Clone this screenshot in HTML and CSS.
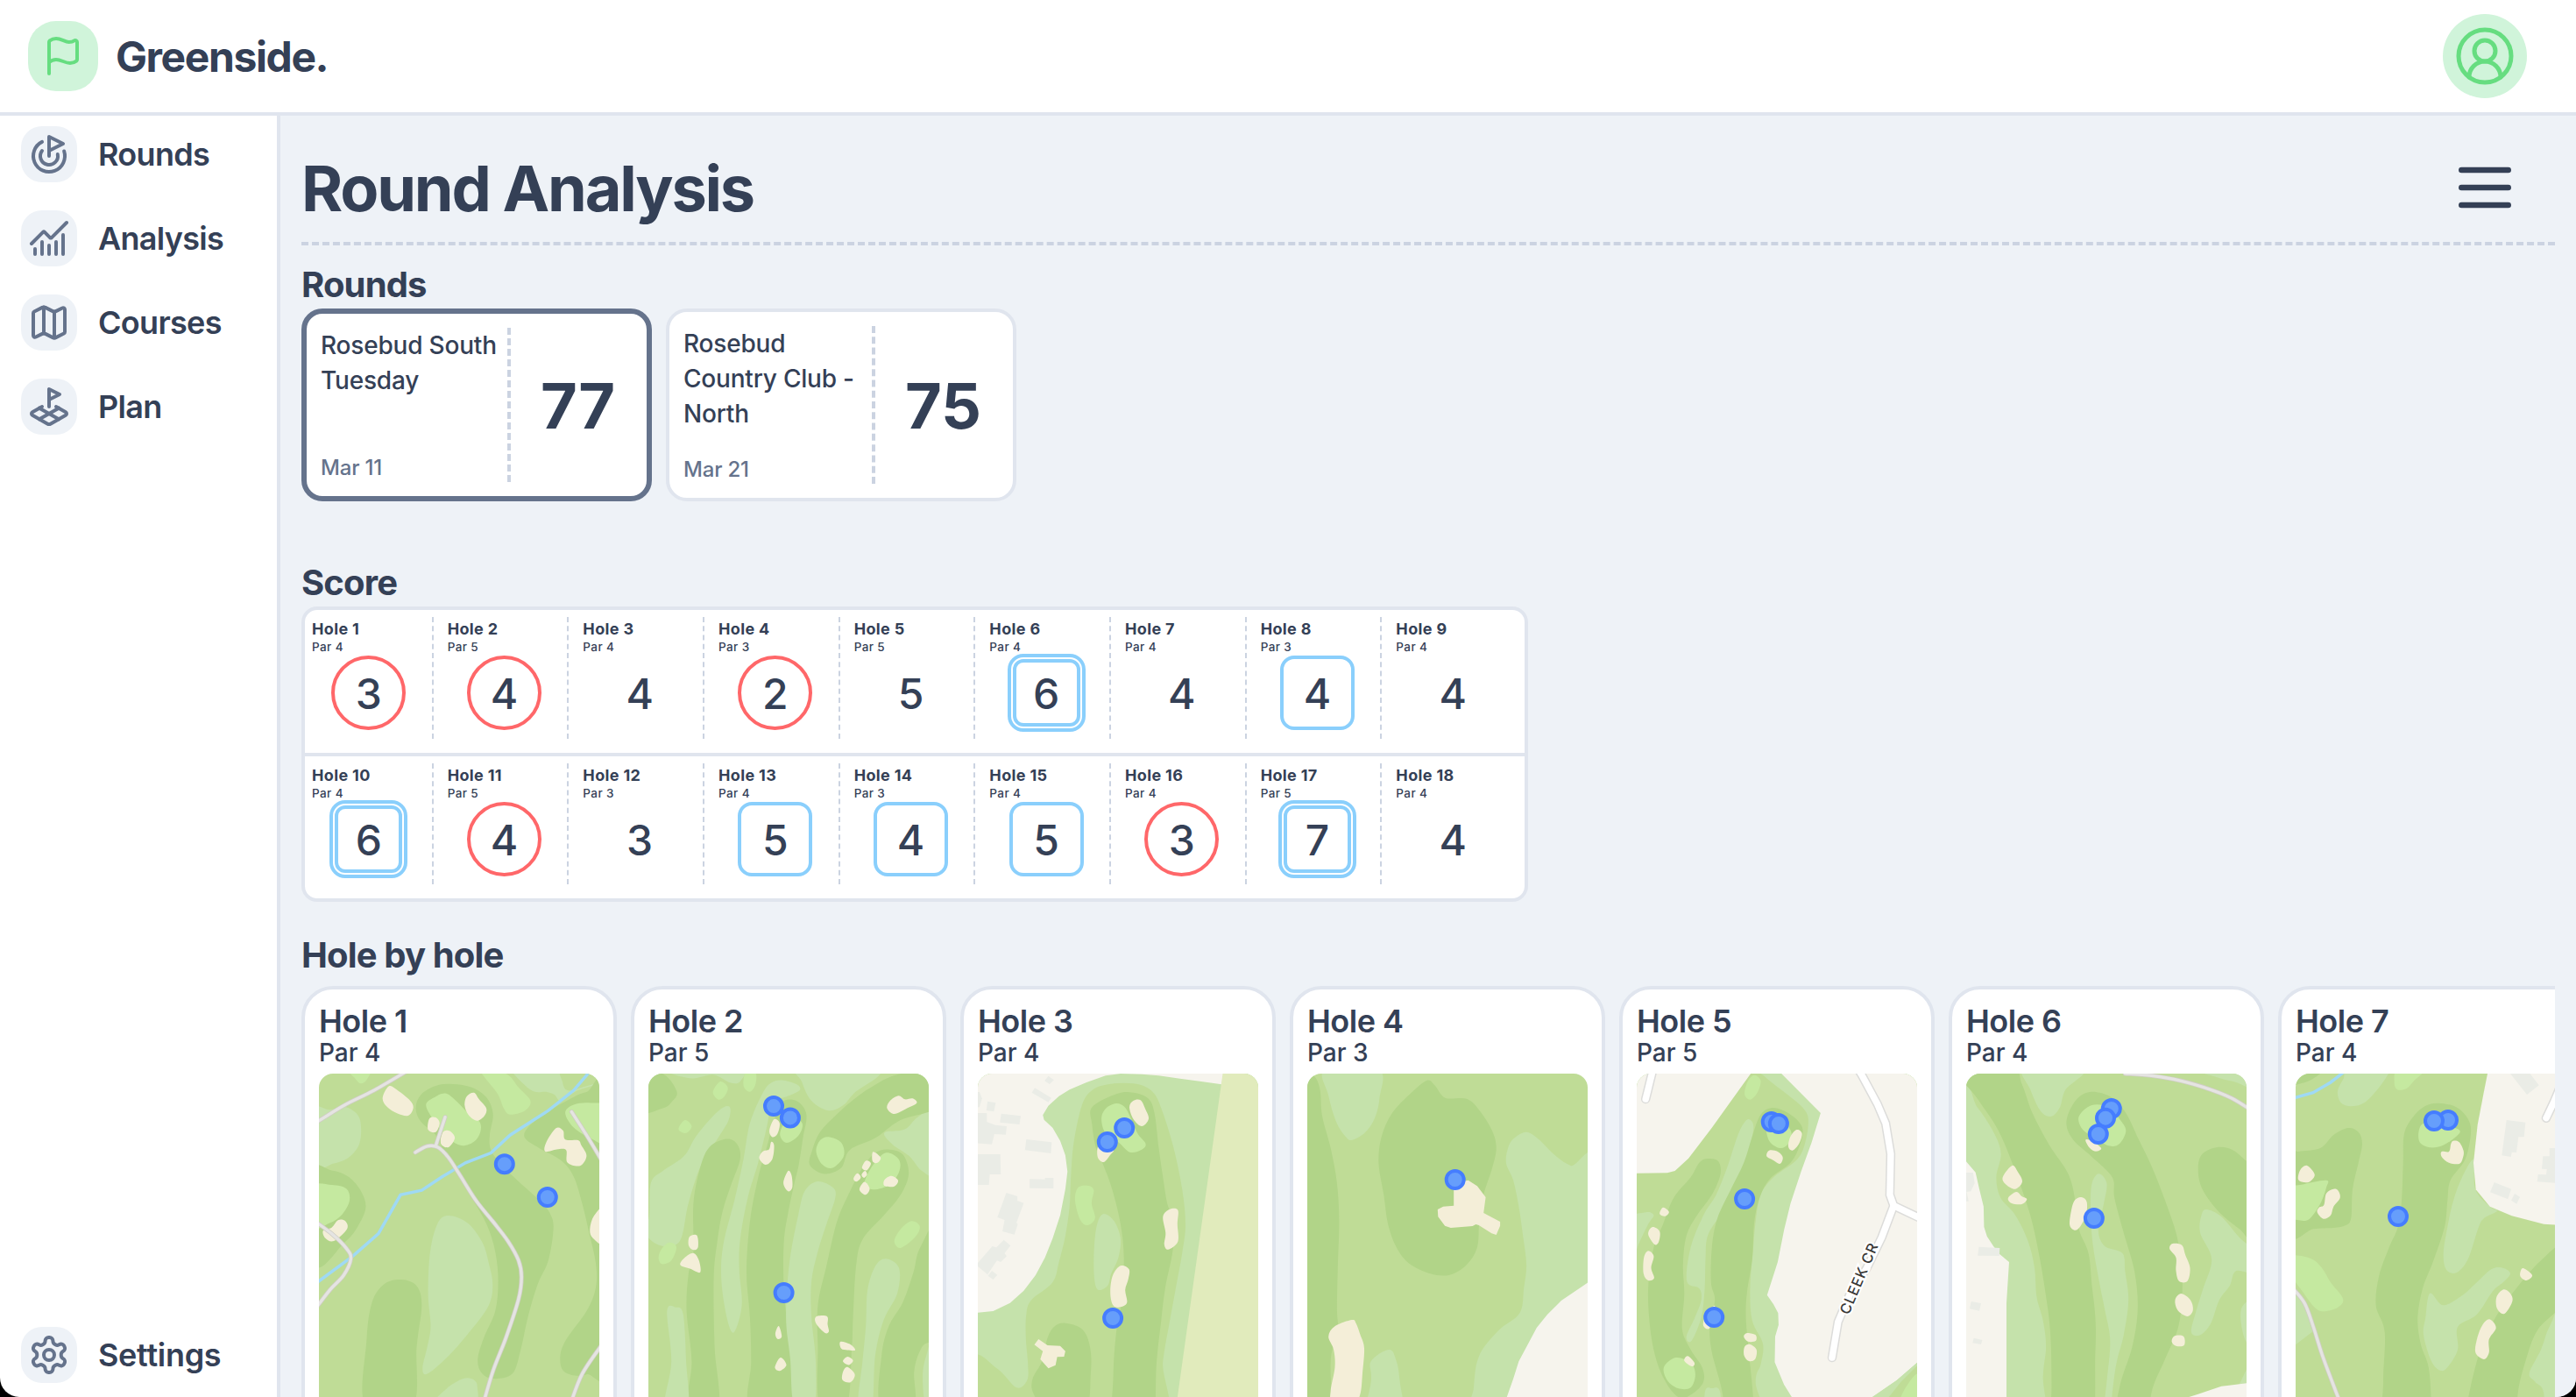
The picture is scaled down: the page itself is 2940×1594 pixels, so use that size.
FILE: index.html
```html
<!DOCTYPE html>
<html lang="en">
<head>
<meta charset="utf-8">
<title>Greenside</title>
<link rel="stylesheet" href="styles.css">
</head>
<body>
<div class="app">
  <header class="topbar">
    <div class="brand">
      <span class="brand-mark"><svg class="icon" viewBox="0 0 24 24"><path d="M4 22V4a1 1 0 0 1 .4-.8A6 6 0 0 1 8 2c3 0 5 2 7.333 2q2 0 3.067-.8A1 1 0 0 1 20 4v10a1 1 0 0 1-.4.8A6 6 0 0 1 16 16c-3 0-5-2-8-2a6 6 0 0 0-4 1.528"/></svg></span>
      <span class="brand-name">Greenside.</span>
    </div>
    <span class="avatar"><svg class="icon" viewBox="0 0 24 24"><path d="M18 20a6 6 0 0 0-12 0"/><circle cx="12" cy="10" r="4"/><circle cx="12" cy="12" r="10"/></svg></span>
  </header>
  <div class="body">
    <nav class="sidebar">
      <a class="nav-item"><span class="nav-icon"><svg class="icon" viewBox="0 0 24 24"><path d="M12 13V2l8 4-8 4"/><path d="M20.561 10.222a9 9 0 1 1-12.55-5.29"/><path d="M8.002 9.997a5 5 0 1 0 8.9 2.02"/></svg></span>Rounds</a>
      <a class="nav-item"><span class="nav-icon"><svg class="icon" viewBox="0 0 24 24"><path d="M12 16v5"/><path d="M16 14v7"/><path d="M20 10v11"/><path d="m22 3-8.646 8.646a.5.5 0 0 1-.708 0L9.354 8.354a.5.5 0 0 0-.707 0L2 15"/><path d="M4 18v3"/><path d="M8 14v7"/></svg></span>Analysis</a>
      <a class="nav-item"><span class="nav-icon"><svg class="icon" viewBox="0 0 24 24"><path d="M14.106 5.553a2 2 0 0 0 1.788 0l3.659-1.83A1 1 0 0 1 21 4.619v12.764a1 1 0 0 1-.553.894l-4.553 2.277a2 2 0 0 1-1.788 0l-4.212-2.106a2 2 0 0 0-1.788 0l-3.659 1.83A1 1 0 0 1 3 19.381V6.618a1 1 0 0 1 .553-.894l4.553-2.277a2 2 0 0 1 1.788 0z"/><path d="M15 5.764v15"/><path d="M9 3.236v15"/></svg></span>Courses</a>
      <a class="nav-item"><span class="nav-icon"><svg class="icon" viewBox="0 0 24 24"><path d="m12 8 6-3-6-3v10"/><path d="m8 11.99-5.5 3.14a1 1 0 0 0 0 1.74l8.5 4.86a2 2 0 0 0 2 0l8.5-4.86a1 1 0 0 0 0-1.74L16 12"/><path d="m6.49 12.85 11.02 6.3"/><path d="M17.51 12.85 6.5 19.15"/></svg></span>Plan</a>
      <a class="nav-item nav-last"><span class="nav-icon"><svg class="icon" viewBox="0 0 24 24"><path d="M12.22 2h-.44a2 2 0 0 0-2 2v.18a2 2 0 0 1-1 1.73l-.43.25a2 2 0 0 1-2 0l-.15-.08a2 2 0 0 0-2.73.73l-.22.38a2 2 0 0 0 .73 2.73l.15.1a2 2 0 0 1 1 1.72v.51a2 2 0 0 1-1 1.74l-.15.09a2 2 0 0 0-.73 2.73l.22.38a2 2 0 0 0 2.73.73l.15-.08a2 2 0 0 1 2 0l.43.25a2 2 0 0 1 1 1.73V20a2 2 0 0 0 2 2h.44a2 2 0 0 0 2-2v-.18a2 2 0 0 1 1-1.73l.43-.25a2 2 0 0 1 2 0l.15.08a2 2 0 0 0 2.73-.73l.22-.39a2 2 0 0 0-.73-2.73l-.15-.08a2 2 0 0 1-1-1.74v-.5a2 2 0 0 1 1-1.74l.15-.09a2 2 0 0 0 .73-2.73l-.22-.38a2 2 0 0 0-2.73-.73l-.15.08a2 2 0 0 1-2 0l-.43-.25a2 2 0 0 1-1-1.73V4a2 2 0 0 0-2-2z"/><circle cx="12" cy="12" r="3"/></svg></span>Settings</a>
    </nav>
    <main class="main">
      <div class="page-head">
        <h1>Round Analysis</h1>
        <svg class="icon menu" viewBox="0 0 24 24"><path d="M4 6h16M4 12h16M4 18h16"/></svg>
      </div>

      <h2 class="h-rounds">Rounds</h2>
      <div class="rounds">
        <article class="round selected">
          <div class="round-info"><p>Rosebud South Tuesday</p><time>Mar 11</time></div>
          <strong>77</strong>
        </article>
        <article class="round">
          <div class="round-info"><p>Rosebud Country Club - North</p><time>Mar 21</time></div>
          <strong>75</strong>
        </article>
      </div>

      <h2 class="h-score">Score</h2>
      <div class="scorecard">
        <div class="nine">
          <div class="cell"><b>Hole 1</b><small>Par 4</small><span class="score birdie">3</span></div>
          <div class="cell"><b>Hole 2</b><small>Par 5</small><span class="score birdie">4</span></div>
          <div class="cell"><b>Hole 3</b><small>Par 4</small><span class="score">4</span></div>
          <div class="cell"><b>Hole 4</b><small>Par 3</small><span class="score birdie">2</span></div>
          <div class="cell"><b>Hole 5</b><small>Par 5</small><span class="score">5</span></div>
          <div class="cell"><b>Hole 6</b><small>Par 4</small><span class="score double">6</span></div>
          <div class="cell"><b>Hole 7</b><small>Par 4</small><span class="score">4</span></div>
          <div class="cell"><b>Hole 8</b><small>Par 3</small><span class="score bogey">4</span></div>
          <div class="cell"><b>Hole 9</b><small>Par 4</small><span class="score">4</span></div>
        </div>
        <div class="nine">
          <div class="cell"><b>Hole 10</b><small>Par 4</small><span class="score double">6</span></div>
          <div class="cell"><b>Hole 11</b><small>Par 5</small><span class="score birdie">4</span></div>
          <div class="cell"><b>Hole 12</b><small>Par 3</small><span class="score">3</span></div>
          <div class="cell"><b>Hole 13</b><small>Par 4</small><span class="score bogey">5</span></div>
          <div class="cell"><b>Hole 14</b><small>Par 3</small><span class="score bogey">4</span></div>
          <div class="cell"><b>Hole 15</b><small>Par 4</small><span class="score bogey">5</span></div>
          <div class="cell"><b>Hole 16</b><small>Par 4</small><span class="score birdie">3</span></div>
          <div class="cell"><b>Hole 17</b><small>Par 5</small><span class="score double">7</span></div>
          <div class="cell"><b>Hole 18</b><small>Par 4</small><span class="score">4</span></div>
        </div>
      </div>

      <h2 class="h-holes">Hole by hole</h2>
      <div class="holes">
        <article class="hole"><h3>Hole 1</h3><p>Par 4</p><svg class="map" data-hole="1"></svg></article>
        <article class="hole"><h3>Hole 2</h3><p>Par 5</p><svg class="map" data-hole="2"></svg></article>
        <article class="hole"><h3>Hole 3</h3><p>Par 4</p><svg class="map" data-hole="3"></svg></article>
        <article class="hole"><h3>Hole 4</h3><p>Par 3</p><svg class="map" data-hole="4"></svg></article>
        <article class="hole"><h3>Hole 5</h3><p>Par 5</p><svg class="map" data-hole="5"><text class="street" transform="translate(242 276) rotate(-67)">CLEEK CR</text></svg></article>
        <article class="hole"><h3>Hole 6</h3><p>Par 4</p><svg class="map" data-hole="6"></svg></article>
        <article class="hole"><h3>Hole 7</h3><p>Par 4</p><svg class="map" data-hole="7"></svg></article>
      </div>
    </main>
  </div>
</div>
<script src="maps.js"></script>
</body>
</html>
```
FILE: styles.css
```css
* { box-sizing: border-box; margin: 0; padding: 0; }

:root {
  --ink: #344056;
  --muted: #65738c;
  --line: #e0e5ee;
  --dash: #cbd3e1;
  --canvas: #eef2f7;
  --red: #ff6769;
  --sky: #8acffc;
}

body {
  background: #000;
  color: var(--ink);
  font-family: Inter, "Liberation Sans", sans-serif;
  height: 1594px;
  overflow: hidden;
}

.app {
  display: flex;
  flex-direction: column;
  width: 2940px;
  height: 1594px;
  background: #fff;
  border-radius: 0 0 22px 22px;
  overflow: hidden;
}

.icon {
  fill: none;
  stroke: currentColor;
  stroke-width: 2;
  stroke-linecap: round;
  stroke-linejoin: round;
}

.topbar {
  display: flex;
  align-items: center;
  justify-content: space-between;
  flex: none;
  height: 132px;
  padding: 0 56px 0 32px;
  border-bottom: 4px solid var(--line);
}
.brand { display: flex; align-items: center; gap: 20px; }
.brand-mark, .avatar {
  display: grid;
  place-items: center;
  background: #d0f4da;
  color: #66dd80;
}
.brand-mark { width: 80px; height: 80px; border-radius: 32px; }
.brand-mark .icon { width: 48px; height: 48px; }
.brand-name { font-size: 48px; font-weight: 700; letter-spacing: -1.4px; }
.avatar { width: 96px; height: 96px; border-radius: 50%; }
.avatar .icon { width: 72px; height: 72px; stroke-width: 1.67; }

.body { display: flex; flex: 1; min-height: 0; }
.sidebar {
  display: flex;
  flex-direction: column;
  gap: 32px;
  flex: none;
  width: 320px;
  padding: 12px 24px 16px;
  border-right: 4px solid var(--line);
}
.nav-item {
  display: flex;
  align-items: center;
  gap: 24px;
  font-size: 36px;
  font-weight: 600;
  letter-spacing: -.7px;
}
.nav-icon {
  display: grid;
  place-items: center;
  width: 64px;
  height: 64px;
  border-radius: 24px;
  background: var(--canvas);
  color: var(--muted);
}
.nav-icon .icon { width: 48px; height: 48px; }
.nav-last { margin-top: auto; letter-spacing: -.3px; }

.main {
  flex: 1;
  min-width: 0;
  padding: 0 24px;
  background: var(--canvas);
  overflow: hidden;
}
.page-head {
  display: flex;
  align-items: center;
  justify-content: space-between;
  height: 148px;
  padding: 42px 40px 22px 0;
  border-bottom: 4px dashed var(--dash);
}
h1 { padding-top: 2px; font-size: 72px; font-weight: 700; line-height: 80px; letter-spacing: -2.2px; }
.menu { width: 80px; height: 80px; }
h2 { font-size: 40px; font-weight: 700; line-height: 48px; letter-spacing: -.85px; }
.h-rounds { margin: 21px 0 3px; }
.h-score { margin: 69px 0 3px; }
.h-holes { margin: 37px 0 11px; }

.rounds { display: flex; gap: 16px; }
.round {
  display: flex;
  width: 400px;
  height: 220px;
  padding: 16px;
  border: 4px solid var(--line);
  border-radius: 24px;
  background: #fff;
}
.round.selected { border: 6px solid var(--muted); }
.round-info {
  display: flex;
  flex-direction: column;
  justify-content: space-between;
  width: 219px;
  border-right: 4px dashed var(--dash);
  font-size: 28px;
  font-weight: 500;
  line-height: 40px;
  letter-spacing: -.2px;
}
.selected .round-info { width: 217px; }
.round-info time { color: var(--muted); font-size: 24px; font-weight: 500; line-height: 32px; }
.round strong {
  flex: 1;
  align-self: center;
  padding: 2px 0 0 14px;
  text-align: center;
  font-size: 72px;
  font-weight: 700;
  line-height: 80px;
}

.scorecard {
  width: 1400px;
  border: 4px solid var(--line);
  border-radius: 18px;
  background: #fff;
}
.nine { display: grid; grid-template-columns: repeat(9, 1fr); height: 163px; padding: 8px 0 16px; }
.nine + .nine { height: 166px; border-top: 4px solid var(--line); }
.cell {
  display: flex;
  flex-direction: column;
  margin-right: 8px;
  padding: 4px 0 0 8px;
  border-right: 2px dashed var(--dash);
}
.cell:last-child { border-right-color: transparent; }
.cell b { font-size: 18px; font-weight: 700; line-height: 20px; letter-spacing: .35px; }
.cell small { font-size: 13.5px; font-weight: 500; line-height: 20px; letter-spacing: .4px; }
.score {
  display: grid;
  place-items: center;
  align-self: center;
  width: 85px;
  height: 85px;
  padding-top: 3px;
  margin-left: -7px;
  border: 4px solid transparent;
  font-size: 48px;
  font-weight: 500;
  line-height: 1;
}
.birdie { border-color: var(--red); border-radius: 50%; }
.bogey { border-color: var(--sky); border-radius: 16px; }
.double {
  width: 77px;
  height: 77px;
  margin-top: 4px;
  border-color: var(--sky);
  border-radius: 12px;
  outline: 4px solid var(--sky);
  outline-offset: 2px;
}

.holes { display: flex; gap: 16px; overflow: hidden; }
.hole {
  flex: none;
  width: 360px;
  height: 640px;
  padding: 16px;
  border: 4px solid var(--line);
  border-radius: 36px;
  background: #fff;
}
.hole h3 { font-size: 36px; font-weight: 600; line-height: 40px; letter-spacing: -.5px; }
.hole p { font-size: 28px; font-weight: 500; line-height: 32px; }
.map {
  display: block;
  width: 320px;
  height: 520px;
  margin-top: 8px;
  border-radius: 16px;
  background: #bfdc96;
}
.fairway { fill: #b1d488; }
.rough { fill: #bfdc96; }
.trees { fill: #c5e2ab; }
.green { fill: #c5e9a0; }
.sand { fill: #f4eed8; }
.land { fill: #f6f4ed; }
.field { fill: #e1ebbc; }
.building { fill: #eaece6; }
.water { fill: none; stroke: #9fd9f4; stroke-width: 3.5; }
.path-edge { fill: none; stroke: #cfcdc4; stroke-width: 5; stroke-linecap: round; }
.path { fill: none; stroke: #e5e4e2; stroke-width: 3.4; stroke-linecap: round; }
.road-edge { fill: none; stroke: #dcdcda; stroke-width: 10.5; stroke-linecap: round; }
.road { fill: none; stroke: #fff; stroke-width: 7.5; stroke-linecap: round; }
.shot { fill: #669efb; stroke: #457dff; stroke-width: 4; }
.street {
  fill: #3a3937;
  stroke: #fff;
  stroke-width: 4px;
  paint-order: stroke;
  font-size: 16.5px;
  font-weight: 500;
  letter-spacing: .9px;
}
```
FILE: maps.js
```js
// A feature is [kind, points]; kinds ending in "!" keep straight edges.
const maps = {
  1: { ox: 70, oy: 484, kx: 2.063, ky: 2.936, shots: [[507,787],[608,898]], features: [
    ['trees', '520,470 570,540 605,545 625,555 640,575 680,540 760,500 760,440 520,440'],
    ['rough', '645,470 643,510 655,540 690,530 740,505 740,470'],
    ['trees', '50,605 95,605 130,595 160,620 169,660 165,720 140,765 105,785 50,797'],
    ['trees', '375,960 420,985 455,1050 470,1120 479,1190 470,1260 430,1340 375,1430 325,1490 314,1470 325,1400 333,1330 327,1220 332,1080 350,985'],
    ['trees', '345,1590 370,1540 410,1506 435,1510 443,1535 435,1590'],
    ['fairway', '298,600 310,555 345,525 385,519 430,530 465,565 480,620 472,690 475,740 500,790 540,845 590,910 615,955 622,1005 610,1110 585,1190 562,1300 545,1410 525,1490 480,1506 452,1485 444,1440 458,1370 485,1280 492,1180 485,1080 465,990 430,900 400,825 370,760 345,690 310,645'],
    ['fairway', '760,540 700,546 660,570 600,620 562,665 555,700 590,735 640,775 670,830 690,920 705,1010 722,1120 722,1200 700,1280 650,1380 638,1440 650,1485 700,1492 760,1430'],
    ['fairway', '50,815 100,808 140,830 170,880 180,935 160,1000 130,1050 60,1125'],
    ['fairway', '180,1600 182,1380 195,1250 225,1188 265,1174 300,1195 312,1260 300,1400 290,1600'],
    ['green', '322,590 340,565 368,550 395,578 420,615 448,645 450,680 435,712 405,725 375,700 340,640'],
    ['green', '450,470 510,484 540,530 568,575 555,608 520,621 505,600 490,550'],
    ['green', '650,615 670,588 710,582 760,600 760,725 715,705 670,665'],
    ['green', '50,865 100,857 135,870 142,910 125,955 95,985 50,1000'],
    ['green', '140,470 155,500 168,517 182,505 190,470'],
    ['sand', '235,526 255,540 285,575 292,600 280,625 255,618 230,595 220,565'],
    ['sand', '435,548 447,570 464,600 460,625 442,642 422,622 413,590 418,560'],
    ['sand', '330,635 345,631 354,650 345,680 327,672'],
    ['sand', '362,680 378,676 390,700 375,731 357,718'],
    ['sand', '628,667 645,675 650,705 680,707 688,725 700,760 685,793 655,782 652,740 630,738 603,745 605,715'],
    ['sand', '745,930 718,960 708,1005 715,1035 745,1055'],
    ['sand', '80,1010 100,1000 115,975 132,978 136,1005 105,1045 85,1035'],
    ['water!', '712,470 670,540 610,608 520,690 475,750 415,783 360,830 312,875 262,890 210,1020 150,1095 50,1200'],
    ['path', '50,660 130,590 200,540 290,465'],
    ['path', '367,630 345,726'],
    ['path', '297,748 325,727 350,731 375,765 400,820 440,910 480,980 515,1045 540,1110 547,1165 540,1240 510,1370 480,1480 455,1600'],
    ['path', '665,612 700,690 740,785'],
    ['path', '50,968 100,1020 135,1070 145,1105 128,1160 95,1210 60,1275'],
    ['path', '660,1600 690,1490 740,1385'] ] },
  2: { ox: 846, oy: 484, kx: 2.063, ky: 2.936, shots: [[1141,593],[1180,632],[1165,1218]], features: [
    ['fairway', '820,480 880,485 913,545 900,580 880,600 820,612'],
    ['trees', '1200,460 1207,510 1230,575 1270,608 1305,590 1330,550 1390,470'],
    ['trees', '1520,610 1480,630 1450,670 1402,682 1420,720 1460,760 1490,810 1520,812'],
    ['trees', '900,484 950,500 1000,488 1040,515 1062,510 1060,470 900,470'],
    ['trees', '1037,595 1010,610 960,690 930,760 880,810 852,850 848,960 840,1020 875,1060 920,1045 940,920 970,790 1010,700 1035,640'],
    ['fairway', '1535,470 1430,488 1370,530 1330,570 1290,620 1250,680 1232,740 1226,790 1260,820 1300,800 1320,740 1380,700 1440,640 1535,590'],
    ['fairway', '1160,580 1195,576 1218,620 1210,700 1200,790 1190,850 1175,950 1165,1050 1165,1200 1175,1350 1183,1450 1185,1600 1085,1600 1088,1450 1085,1300 1077,1150 1085,980 1105,830 1125,730 1140,650'],
    ['trees', '1160,506 1195,520 1202,540 1170,562 1130,580 1128,640 1105,780 1080,900 1062,1040 1060,1140 1066,1260 1048,1350 1032,1310 1018,1180 1022,1060 1050,900 1070,770 1085,650 1115,550 1135,515'],
    ['fairway', '1030,703 1055,720 1062,770 1040,860 1020,950 1008,1050 1000,1170 1002,1400 1010,1600 940,1600 948,1450 936,1280 940,1160 952,1080 952,920 968,800 990,730'],
    ['trees', '890,1280 910,1267 928,1290 935,1450 938,1600 885,1600 900,1450'],
    ['trees', '1245,845 1280,865 1286,900 1265,990 1245,1080 1230,1180 1230,1300 1240,1450 1235,1600 1190,1600 1180,1440 1170,1300 1178,1120 1200,950 1215,875'],
    ['fairway', '1410,738 1445,755 1459,820 1440,890 1400,960 1350,1040 1335,1130 1328,1300 1325,1400 1312,1600 1250,1600 1245,1400 1245,1260 1265,1130 1290,980 1320,880 1350,800 1380,750'],
    ['fairway', '1530,990 1485,1070 1470,1150 1445,1250 1412,1330 1395,1430 1393,1600 1470,1600 1472,1480 1490,1400 1530,1330'],
    ['trees', '1405,1104 1436,1135 1432,1220 1400,1310 1380,1430 1372,1600 1340,1600 1350,1450 1358,1330 1362,1210 1380,1130'],
    ['trees', '1520,1370 1500,1430 1492,1500 1500,1600 1530,1600'],
    ['green', '1075,480 1070,525 1085,545 1098,520 1098,480'],
    ['green', '1015,511 1033,530 1025,560 1010,571 998,545'],
    ['green', '932,640 948,660 935,683 917,670'],
    ['green', '1180,625 1208,650 1200,690 1172,716 1156,690 1165,650'],
    ['green', '1270,696 1300,715 1306,760 1280,800 1255,788 1241,745 1250,708'],
    ['green', '1405,749 1435,770 1437,810 1415,855 1375,872 1355,850 1375,790'],
    ['green', '1465,978 1485,995 1475,1030 1440,1068 1425,1045 1440,1005'],
    ['green', '895,1050 912,1065 900,1110 878,1122 870,1100 878,1070'],
    ['sand', '1435,558 1450,570 1468,567 1478,582 1455,600 1425,619 1408,600 1415,575'],
    ['sand', '1142,637 1155,650 1150,685 1138,697 1131,675'],
    ['sand', '1135,713 1142,725 1138,770 1122,789 1107,768 1115,745 1130,738'],
    ['sand', '1175,810 1183,825 1185,865 1175,878 1164,850'],
    ['sand', '1375,746 1393,765 1385,783 1374,778'],
    ['sand', '1358,776 1370,785 1360,808 1349,800'],
    ['sand', '1338,818 1346,832 1336,846 1329,836'],
    ['sand', '1356,810 1361,822 1354,833 1348,823'],
    ['sand', '1355,847 1367,870 1357,890 1343,872'],
    ['sand', '1418,827 1434,842 1425,862 1402,860 1402,840'],
    ['sand', '943,1030 960,1026 963,1065 952,1075 941,1060'],
    ['sand', '952,1085 965,1110 968,1150 945,1138 921,1125 932,1100'],
    ['sand', '1245,1296 1267,1298 1268,1325 1271,1348 1262,1353 1245,1330 1238,1308'],
    ['sand', '1153,1330 1160,1365 1150,1373 1145,1355'],
    ['sand', '1157,1435 1171,1460 1155,1480 1144,1468'],
    ['sand', '1298,1382 1320,1390 1333,1410 1315,1410 1300,1405'],
    ['sand', '1315,1432 1328,1445 1318,1460 1304,1448'],
    ['sand', '1315,1467 1332,1492 1322,1518 1303,1510 1305,1480'] ] },
  3: { ox: 74, oy: 345, kx: 2.063, ky: 3, shots: [[419,531],[379,579],[392,1182]], features: [
    ['trees!', '0,300 760,300 760,1600 0,1600'],
    ['land!', '60,330 655,330 648,382 600,372 550,362 500,352 460,347 410,345 375,352 330,375 290,400 265,422 240,455 227,487 230,503 250,530 268,575 280,625 285,680 280,740 268,830 250,910 232,975 210,1035 182,1088 150,1130 110,1158 60,1165'],
    ['field!', '652,330 760,330 760,1600 530,1600'],
    ['rough', '420,377 460,385 490,415 510,480 535,600 555,740 563,860 555,960 540,1080 525,1200 510,1330 490,1600 50,1600 60,1320 120,1355 165,1420 190,1395 192,1340 187,1250 188,1170 200,1120 250,1060 265,990 280,900 290,800 293,700 300,580 320,450 345,400 380,382'],
    ['fairway', '400,415 440,410 475,430 490,480 500,600 510,700 520,790 535,850 533,950 515,1080 505,1200 495,1330 480,1600 395,1600 393,1380 400,1230 412,1130 418,980 410,860 390,740 370,660 352,600 343,520 343,460'],
    ['fairway', '280,1199 320,1220 338,1280 340,1370 325,1500 240,1500 205,1440 203,1390 225,1330 238,1250 255,1210'],
    ['trees', '370,825 395,850 410,910 405,975 388,1030 380,1070 357,1085 348,1040 348,940 355,860'],
    ['green', '400,447 420,460 435,500 450,550 469,585 460,605 432,614 405,580 375,550 365,500 375,465'],
    ['green', '310,735 335,729 347,745 342,790 350,840 332,864 315,845 303,780'],
    ['sand', '440,438 457,436 468,465 476,500 460,525 440,500 431,460'],
    ['sand', '360,590 393,605 385,625 370,648 356,630'],
    ['sand', '525,810 545,812 544,860 545,920 522,947 513,930 516,890 510,835'],
    ['sand', '410,1003 430,1015 428,1050 421,1085 425,1130 405,1145 391,1135 386,1090 392,1035'],
    ['sand!', '217,1254 238,1275 268,1277 280,1295 277,1314 261,1315 257,1343 240,1354 221,1323 227,1295 207,1273'],
    ['building!', '240,353 253,367 243,381 231,370'],
    ['building!', '208,394 247,428 240,443 201,410'],
    ['building!', '97,440 116,445 112,475 94,471'],
    ['building!', '60,408 78,408 84,430 78,460 60,460'],
    ['building!', '129,482 175,490 172,519 126,512'],
    ['building!', '60,480 95,480 95,510 115,521 142,525 140,554 113,552 107,587 60,582'],
    ['building!', '188,570 248,580 246,618 185,607'],
    ['building!', '60,621 127,621 128,690 102,690 100,726 60,726'],
    ['building!', '196,706 232,707 232,702 252,702 252,738 196,737'],
    ['building!', '141,753 167,765 167,780 182,788 165,855 168,860 160,896 132,885 137,846 120,837'],
    ['building!', '135,914 151,934 137,960 142,970 128,990 119,985 97,1033 70,1000 108,936 118,940'],
    ['building!', '107,1020 120,1034 110,1050 98,1037'] ] },
  4: { ox: 850, oy: 345, kx: 2.063, ky: 3, shots: [[1198,708]], features: [
    ['fairway', '830,330 865,352 880,400 885,490 905,600 920,720 925,850 922,1000 920,1150 922,1230 905,1330 905,1600 830,1600'],
    ['trees', '892,330 900,420 918,510 940,560 955,572 985,548 1008,500 1020,430 1018,330'],
    ['fairway', '1132,368 1150,385 1175,428 1225,431 1255,470 1285,540 1295,600 1285,670 1265,760 1255,850 1250,940 1225,1000 1185,1034 1140,1030 1090,995 1060,940 1040,860 1030,760 1018,650 1025,560 1050,480 1095,410'],
    ['trees', '1367,545 1395,570 1430,620 1470,660 1540,685 1540,1600 1238,1600 1242,1420 1255,1310 1300,1225 1350,1165 1360,1080 1366,1000 1358,900 1348,800 1335,710 1318,650 1325,590 1342,560'],
    ['trees', '1043,1290 1060,1330 1068,1400 1080,1600 980,1600 1000,1400 1000,1330'],
    ['land!', '1540,1030 1509,1062 1448,1122 1415,1170 1390,1215 1370,1270 1348,1330 1335,1390 1320,1452 1300,1600 1540,1600'],
    ['sand!', '1229,710 1250,730 1270,768 1265,822 1304,852 1304,866 1295,897 1284,892 1254,864 1247,861 1239,867 1188,873 1174,866 1158,835 1157,810 1170,800 1195,797 1195,720'],
    ['sand', '955,1188 965,1200 975,1240 984,1285 980,1370 975,1440 960,1470 910,1465 905,1430 915,1350 912,1290 900,1245 915,1210'] ] },
  5: { ox: 78, oy: 345, kx: 2.063, ky: 3, shots: [[395,510],[412,516],[332,774],[260,1179]], features: [
    ['trees!', '0,300 760,300 760,1600 0,1600'],
    ['rough', '340,320 370,345 400,380 440,425 468,460 482,500 475,580 455,640 400,700 370,760 358,850 352,950 345,1080 350,1190 375,1270 370,1340 358,1400 362,1600 40,1600 40,600 200,500'],
    ['trees', '343,502 353,530 340,620 322,700 300,780 275,830 245,900 240,980 238,1080 230,1180 207,1260 195,1245 215,1180 230,1120 225,1080 196,1055 205,940 235,830 265,760 290,670 315,560 330,515'],
    ['trees', '60,850 100,820 118,830 105,860 85,920 60,1000'],
    ['fairway', '245,636 270,645 275,690 255,760 220,830 195,900 187,1000 190,1100 185,1220 205,1290 232,1350 235,1400 210,1440 180,1455 150,1410 125,1330 110,1220 105,1080 118,940 140,860 165,770 205,700 225,650'],
    ['fairway', '400,462 440,485 468,530 462,590 440,650 395,700 370,760 355,850 350,980 338,1090 335,1180 342,1300 352,1450 355,1600 290,1600 280,1440 255,1300 250,1210 262,1120 253,1060 255,940 268,840 300,740 330,650 350,560 370,485'],
    ['green', '355,350 370,370 362,410 345,434 332,415 340,370'],
    ['green', '385,520 420,510 442,545 435,585 415,600 390,575'],
    ['green', '170,1317 205,1335 216,1375 205,1420 175,1422 150,1395 142,1350'],
    ['trees', '240,1600 238,1440 255,1422 275,1440 275,1600'],
    ['sand', '455,537 467,550 460,585 445,608 435,595 440,560'],
    ['sand', '390,608 410,612 422,632 415,654 400,642 384,628'],
    ['sand', '140,803 154,818 145,833 132,825'],
    ['sand', '115,870 132,885 130,920 120,930 105,895'],
    ['sand', '105,952 118,970 112,1010 119,1045 105,1053 94,1030 95,975'],
    ['sand', '262,1140 240,1175 235,1208 250,1215'],
    ['sand', '338,1233 358,1240 358,1260 340,1262 330,1245'],
    ['sand', '345,1272 360,1290 357,1322 342,1329 331,1310 332,1280'],
    ['sand', '198,1312 214,1335 208,1347 190,1328'],
    ['land!', '60,330 355,330 345,348 312,415 255,530 200,635 168,678 150,685 60,687'],
    ['land!', '405,325 760,325 760,1310 739,1333 690,1395 630,1455 600,1500 440,1600 443,1452 425,1410 403,1333 404,1245 412,1205 411,1165 400,1135 385,1103 410,990 425,880 440,790 465,680 490,580 511,480'],
    ['trees!', '745,1327 690,1395 620,1465 760,1465'],
    ['rough!', '745,1335 700,1400 665,1465 760,1465'],
    ['green', '745,1375 720,1400 700,1470 760,1470'],
    ['road', '118,320 108,380 99,432'],
    ['road!', '595,320 608,350 645,450 664,515 676,620 674,760 683,797 655,905 620,1010 580,1100 552,1195 538,1317'],
    ['road!', '683,797 760,850'] ] },
  6: { ox: 854, oy: 345, kx: 2.063, ky: 3, shots: [[1196,465],[1182,497],[1165,552],[1155,840]], features: [
    ['trees', '1400,330 1450,360 1490,375 1540,400 1540,320'],
    ['trees', '830,390 880,460 920,550 936,620 925,700 935,770 970,830 1000,920 1015,1010 1020,1110 1035,1190 1042,1280 1035,1380 1030,1600 830,1600'],
    ['fairway', '830,320 960,320 985,380 1010,480 1050,590 1095,690 1112,790 1120,880 1142,960 1150,1070 1158,1180 1158,1300 1145,1600 1050,1600 1055,1430 1052,1230 1040,1090 1025,960 1005,830 970,680 930,540 880,430'],
    ['trees', '990,320 1005,400 1030,475 1055,491 1075,460 1088,400 1130,330'],
    ['fairway', '1145,408 1195,425 1230,480 1260,570 1290,660 1320,770 1350,900 1362,1020 1362,1120 1352,1220 1320,1330 1290,1440 1280,1600 1200,1600 1215,1420 1245,1280 1258,1150 1250,1020 1225,890 1203,770 1198,700 1150,630 1105,570 1090,510 1110,440'],
    ['fairway', '1540,690 1510,640 1480,605 1445,597 1410,620 1400,670 1410,740 1450,820 1500,880 1540,930'],
    ['trees', '1165,688 1185,720 1178,790 1165,880 1180,935 1222,960 1228,1020 1236,1120 1225,1240 1205,1360 1185,1600 1170,1600 1185,1400 1193,1260 1180,1150 1165,1040 1150,900 1148,740'],
    ['trees', '1420,810 1455,835 1500,910 1540,960 1540,1030 1490,1020 1475,1070 1450,1120 1430,1200 1405,1240 1384,1230 1395,1160 1412,1080 1432,980 1405,890 1408,830'],
    ['trees', '1540,1120 1508,1135 1500,1180 1512,1260 1540,1290'],
    ['trees', '1540,1300 1500,1400 1490,1440 1540,1440'],
    ['land!', '830,610 854,646 876,683 885,740 895,800 896,870 903,902 918,935 932,962 955,990 949,1130 949,1600 830,1600'],
    ['land!', '1340,1470 1400,1442 1455,1415 1540,1400 1540,1600 1340,1600'],
    ['building!', '840,684 870,684 874,720 865,748 855,750 860,782 840,782'],
    ['building!', '884,938 933,942 932,969 881,968'],
    ['building!', '866,1125 889,1131 885,1157 862,1150'],
    ['building!', '872,1250 892,1257 889,1272 869,1267'],
    ['green', '1150,453 1190,460 1215,500 1230,540 1215,585 1190,592 1150,560 1125,530 1120,490'],
    ['sand', '962,660 975,680 986,715 970,740 948,725 940,700'],
    ['sand', '972,750 985,765 997,775 985,792 960,788 953,770'],
    ['sand', '1135,572 1150,575 1172,600 1160,611 1145,600'],
    ['sand', '1125,768 1138,785 1135,835 1115,880 1098,865 1102,810 1110,778'],
    ['sand', '1340,927 1362,932 1370,965 1381,1010 1375,1055 1355,1055 1348,1020 1348,975 1333,945'],
    ['sand', '1360,1098 1382,1120 1388,1155 1375,1176 1352,1155 1346,1120'],
    ['sand', '1345,1243 1366,1245 1367,1275 1348,1277 1338,1262'],
    ['path', '1228,345 1290,352 1360,370 1430,400 1480,430 1530,475'] ] },
  7: { ox: 240, oy: 345, kx: 3, ky: 3, shots: [[762,504],[714,507],[591,834]], features: [
    ['fairway', '220,330 330,330 300,362 260,378 220,382'],
    ['trees', '560,330 555,350 520,400 475,445 430,457 395,445 384,405 405,360 420,330'],
    ['green', '590,330 578,375 588,400 620,396 645,370 680,330'],
    ['fairway', '220,625 250,612 325,600 370,555 420,531 455,545 468,585 455,650 435,740 430,840 410,865 370,873 300,877 220,897'],
    ['fairway', '730,446 790,460 830,500 840,550 820,640 770,710 760,780 750,870 710,990 675,1080 658,1180 668,1270 695,1350 704,1470 700,1600 545,1600 540,1400 545,1230 515,1140 525,1040 560,940 590,870 603,780 608,650 612,550 645,490 685,455'],
    ['trees', '850,640 855,740 905,800 930,815 885,840 865,875 830,980 790,1027 755,1015 746,960 760,870 780,780 810,700'],
    ['trees', '700,1097 745,1138 810,1105 860,1060 910,1015 950,1010 975,1030 950,1060 915,1090 860,1170 795,1212 795,1290 760,1350 735,1361 705,1330 678,1240 685,1180'],
    ['fairway', '1160,935 1080,985 1000,1075 930,1170 880,1270 850,1370 830,1460 800,1600 1005,1600 1000,1450 1030,1320 1070,1220 1160,1115'],
    ['trees', '1160,1150 1110,1210 1080,1290 1040,1370 1060,1400 1090,1440 1090,1600 1160,1600'],
    ['trees!', '220,1080 240,1095 270,1140 300,1227 240,1273 220,1285'],
    ['green', '662,540 680,515 740,520 800,538 790,560 745,590 700,598 665,580'],
    ['green', '220,740 260,725 345,710 345,735 325,790 290,840 262,848 220,830'],
    ['green', '220,970 290,977 330,1010 360,1060 402,1115 385,1145 335,1159 305,1145 270,1100 220,1025'],
    ['land!', '900,330 884,410 863,520 849,650 857,742 905,800 980,832 1090,860 1160,864 1160,330'],
    ['building!', '960,330 1035,335 1073,385 1032,417 975,345'],
    ['building!', '962,504 1027,512 1022,562 1003,562 996,615 980,614 977,630 946,625'],
    ['building!', '1140,600 1109,600 1109,628 1087,628 1083,671 1100,672 1098,691 1070,690 1067,715 1140,720'],
    ['building!', '920,717 978,740 967,775 906,751'],
    ['building!', '990,756 1008,767 997,791 978,779'],
    ['road', '1150,380 1125,440 1098,497'],
    ['sand', '780,575 800,580 815,610 812,635 800,654 765,650 740,630 740,612 765,612 772,585'],
    ['sand', '279,660 305,690 290,714 270,717 249,707 256,675'],
    ['sand', '370,740 385,745 392,770 370,800 360,830 335,842 314,820 320,803 337,795 345,755'],
    ['sand', '1018,1011 1050,1035 1030,1053 1009,1037'],
    ['sand', '952,1084 975,1097 982,1125 955,1167 930,1150 928,1110'],
    ['sand', '904,1186 926,1215 902,1255 902,1300 885,1323 856,1300 862,1250 880,1205'],
    ['water!', '220,431 240,427 300,410 360,375 420,328'],
    ['path', '225,1075 270,1130 300,1210 330,1305 365,1400 400,1490'] ] },
};

const NS = 'http://www.w3.org/2000/svg';

function trace(pts, closed, straight) {
  const n = pts.length;
  const at = i => closed ? pts[(i + n) % n] : pts[Math.max(0, Math.min(n - 1, i))];
  let d = 'M' + pts[0];
  for (let i = 0; i < (closed ? n : n - 1); i++) {
    const [a, b, c, e] = [at(i - 1), at(i), at(i + 1), at(i + 2)];
    if (straight) { d += 'L' + c; continue; }
    const p = k => [b[k] + (c[k] - a[k]) / 6, c[k] - (e[k] - b[k]) / 6];
    const [x1, x2] = p(0), [y1, y2] = p(1);
    d += `C${x1} ${y1} ${x2} ${y2} ${c}`;
  }
  return d + (closed ? 'Z' : '');
}

function add(svg, before, tag, attrs) {
  const el = document.createElementNS(NS, tag);
  for (const k in attrs) el.setAttribute(k, attrs[k]);
  svg.insertBefore(el, before);
}

document.querySelectorAll('.map').forEach(svg => {
  const m = maps[svg.dataset.hole];
  const label = svg.querySelector('text');
  const px = ([x, y]) => [+((x - m.ox) / m.kx).toFixed(1), +((y - m.oy) / m.ky).toFixed(1)];
  const lines = { water: 1, path: 1, road: 1 };
  const later = [];
  for (const [name, list] of m.features) {
    const kind = name.replace('!', '');
    const pts = list.split(' ').map(s => px(s.split(',').map(Number)));
    const d = trace(pts, !lines[kind], name.endsWith('!'));
    if (kind === 'path' || kind === 'road') {
      add(svg, label, 'path', { class: kind + '-edge', d });
      later.push([kind, d]);
    } else add(svg, label, 'path', { class: kind, d });
  }
  later.forEach(([kind, d]) => add(svg, label, 'path', { class: kind, d }));
  m.shots.forEach(s => {
    const [cx, cy] = px(s);
    add(svg, null, 'circle', { class: 'shot', cx, cy, r: 10 });
  });
});
```
